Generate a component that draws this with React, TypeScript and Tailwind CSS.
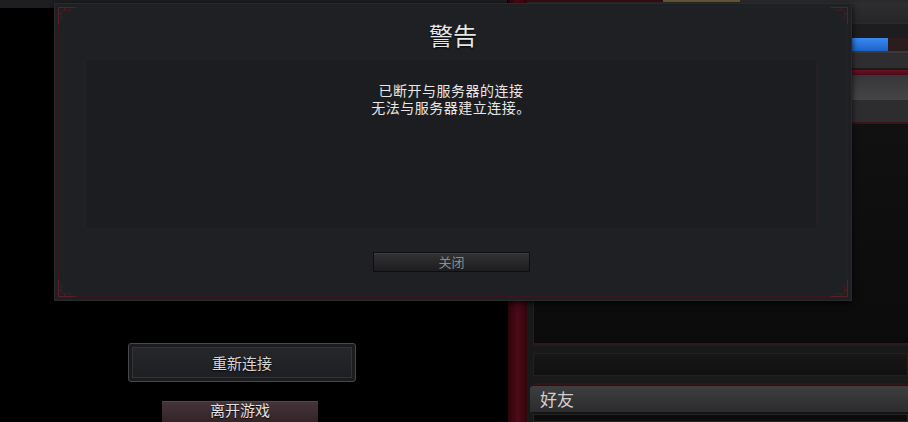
import React from "react";

const cjk = "font-['Noto_Sans_CJK_SC','Noto_Sans',sans-serif]";

// Little L-shaped filigree sitting in each corner of the dialog frame
function Corner({ className }: { className: string }) {
  return (
    <svg className={className} width="18" height="18" viewBox="0 0 18 18" fill="none">
      <path d="M0.5 17.5V0.5H17.5" stroke="#5a2228" />
      <path d="M3.5 13V3.5H13" stroke="#3e1c20" />
      <path d="M0.5 6.5H3.5M6.5 0.5V3.5" stroke="#4a1e23" />
    </svg>
  );
}

function WarningDialog() {
  return (
    <div className="absolute left-[54px] top-[3px] flex h-[298px] w-[798px] flex-col border border-[#2a2a2d] bg-[#1f2023] shadow-[0_2px_6px_rgba(0,0,0,0.8)]">
      <div className="pointer-events-none absolute inset-[3px] border border-[#3a171b]" />
      <Corner className="absolute left-[3px] top-[3px]" />
      <Corner className="absolute right-[3px] top-[3px] -scale-x-100" />
      <Corner className="absolute bottom-[3px] left-[3px] -scale-y-100" />
      <Corner className="absolute bottom-[3px] right-[3px] -scale-100" />

      <div className="mt-[15px] h-[32px] text-center text-[24px] leading-[32px] text-[#e6e6e6] [text-shadow:0_1px_2px_#000]">
        警告
      </div>

      <div className="ml-[30px] mt-[8px] h-[170px] w-[732px] border border-[#262022] bg-[#1c1d20] pt-[22px] text-center text-[14px] leading-[17px] tracking-[0.5px] text-[#e8e8e8]">
        <div>已断开与服务器的连接</div>
        <div>无法与服务器建立连接。</div>
      </div>

      <button className="ml-[318px] mt-[23px] h-[20px] w-[157px] border border-[#0e0e0f] bg-gradient-to-b from-[#333335] to-[#1d1d1f] text-[13px] leading-[18px] text-[#8c8c8c] shadow-[inset_0_1px_0_#3e3e40]">
        关闭
      </button>
    </div>
  );
}

function LeftColumn() {
  return (
    <div className="flex w-[508px] flex-col">
      <div className="flex h-[3px]">
        <div className="w-[507px] bg-[#1e1e20]" />
      </div>
      <div className="h-[6px] w-[54px] bg-[#1e1e20]" />

      <div className="ml-[128px] mt-[335px] h-[41px] w-[228px] rounded-[3px] border border-[#48484a] bg-[#1b1c1e] p-[3px] shadow-[0_1px_2px_#000]">
        <div className="flex h-full items-center justify-center border border-[#343436] bg-gradient-to-b from-[#26272a] to-[#1e1f22] text-[15px] text-[#d6d6d6] [text-shadow:0_1px_2px_#000]">
          重新连接
        </div>
      </div>

      <div className="ml-[162px] mt-[19px] h-[22px] w-[156px] border-t border-[#5a4648] bg-gradient-to-b from-[#45333a] to-[#332427] text-center text-[15px] leading-[16px] text-[#e2e2e2] [text-shadow:0_1px_1px_#000]">
        离开游戏
      </div>
    </div>
  );
}

function RightPanel() {
  return (
    <div className="flex flex-1 flex-col">
      <div className="flex h-[2px]">
        <div className="w-[136px] bg-[#3a0c12]" />
        <div className="w-[77px] bg-[#6a5a3a]" />
        <div className="flex-1 bg-[#2a2a2c]" />
      </div>
      <div className="h-[21px] bg-gradient-to-b from-[#2e2e31] to-[#262629]" />
      <div className="h-[1px] bg-[#4a1c20]" />
      <div className="h-[14px] bg-[#1d1d1f]" />
      <div className="flex h-[13px] bg-[#1d1d1f] pl-[13px]">
        <div className="w-[348px] bg-gradient-to-b from-[#3a8af0] to-[#1a62c8]" />
        <div className="flex-1 bg-[#2b1c1e]" />
      </div>
      <div className="h-[2px] bg-[#3a3a3c]" />
      <div className="h-[15px] bg-[#2e2e30]" />
      <div className="h-[2px] bg-[#1a1a1b]" />
      <div className="h-[5px] bg-gradient-to-b from-[#6e1024] to-[#4a0a18]" />
      <div className="h-[25px] bg-gradient-to-b from-[#363638] to-[#454547]" />
      <div className="h-[22px] bg-[#2d2d2f]" />
      <div className="h-[2px] bg-[#3a1418]" />

      <div className="flex flex-1 flex-col border-l-[6px] border-[#19191a] bg-[#19191a]">
        <div className="h-[222px] border-b-[3px] border-l border-[#2b1a1c] bg-gradient-to-b from-[#111112] to-[#0b0b0c]" />
        <div className="mt-[7px] h-[23px] border border-[#2d1c1e] bg-gradient-to-b from-[#171718] to-[#101011]" />
        <div className="h-[9px] border-b-2 border-[#351316] bg-[#1a1a1b]" />
        <div className="-ml-[3px] mt-[1px] flex h-[26px] items-center rounded-tl-[3px] bg-gradient-to-b from-[#3e3e40] to-[#2c2c2e] pl-[10px] text-[17px] text-[#cfcfcf]">
          好友
        </div>
        <div className="h-[2px] bg-[#141415]" />
        <div className="flex-1 border border-[#252526] bg-[#0c0c0d]" />
      </div>
    </div>
  );
}

export default function App() {
  return (
    <div className={`relative flex h-[422px] w-[908px] overflow-hidden bg-black ${cjk}`}>
      <LeftColumn />
      <div className="w-[19px] bg-gradient-to-r from-[#2a0509] via-[#4e0a16] to-[#30060c]" />
      <RightPanel />
      <WarningDialog />
    </div>
  );
}
